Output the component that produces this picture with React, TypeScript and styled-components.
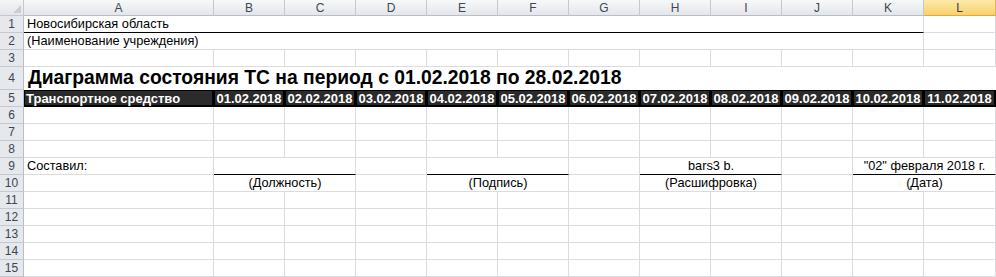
import styled, { createGlobalStyle } from 'styled-components';

const GlobalStyle = createGlobalStyle`
    html, body {
        margin: 0;
        padding: 0;
        background: #fff;
    }
    body {
        overflow: hidden;
    }
`;

const GRID_LINE = '#dadcdd';
const HEAD_LINE = '#c5c9cf';

const COLUMNS = ['A', 'B', 'C', 'D', 'E', 'F', 'G', 'H', 'I', 'J', 'K', 'L'];
const ACTIVE_COLUMN = 'L';

const DATES = Array.from({ length: 11 }, (_, i) => `${String(i + 1).padStart(2, '0')}.02.2018`);

const Sheet = styled.div`
    display: grid;
    grid-template-columns: 24px 190px repeat(10, 71px) 1fr;
    grid-template-rows: 16px repeat(3, 17px) 23px repeat(11, 17px);
    width: 996px;
    height: 277px;
    overflow: hidden;
    font-family: 'Liberation Sans', Arial, sans-serif;
    font-size: 12.75px;
    color: #000;
`;

const Corner = styled.div`
    position: relative;
    background: linear-gradient(#f4f5f7, #e3e6ea);
    border-right: 1px solid ${HEAD_LINE};
    border-bottom: 1px solid ${HEAD_LINE};

    &::after {
        content: '';
        position: absolute;
        right: 2px;
        bottom: 2px;
        border-style: solid;
        border-width: 0 0 8px 8px;
        border-color: transparent transparent #c9cdd2 transparent;
    }
`;

const ColHead = styled.div<{ $active?: boolean }>`
    display: flex;
    align-items: center;
    justify-content: center;
    font-size: 12px;
    color: ${(p) => (p.$active ? '#3b3b3b' : '#3f4650')};
    background: ${(p) =>
        p.$active ? 'linear-gradient(#fdeaa9, #f7d16e)' : 'linear-gradient(#f7f8fa, #e3e6ea)'};
    border-right: 1px solid ${(p) => (p.$active ? '#e9b44c' : HEAD_LINE)};
    border-bottom: 1px solid ${(p) => (p.$active ? '#e0a93a' : '#b9bec6')};
`;

const RowHead = styled.div`
    display: flex;
    align-items: center;
    justify-content: center;
    font-size: 12px;
    color: #3f4650;
    background: #e5e8ec;
    border-right: 1px solid #b9bec6;
    border-bottom: 1px solid ${HEAD_LINE};
`;

type Align = 'left' | 'center' | 'right';

const Cell = styled.div<{ $span?: number; $align?: Align; $rule?: boolean }>`
    grid-column: span ${(p) => p.$span ?? 1};
    display: flex;
    align-items: flex-end;
    justify-content: ${(p) =>
        p.$align === 'center' ? 'center' : p.$align === 'right' ? 'flex-end' : 'flex-start'};
    padding: 0 2px 1px 3px;
    line-height: 14px;
    white-space: nowrap;
    border-right: 1px solid ${GRID_LINE};
    border-bottom: 1px solid ${(p) => (p.$rule ? '#000' : GRID_LINE)};
`;

const TitleCell = styled.div`
    grid-column: span 12;
    display: flex;
    align-items: flex-end;
    padding: 0 0 2px 4px;
    font-size: 19.3px;
    font-weight: bold;
    line-height: 20px;
    white-space: nowrap;
`;

const HeadCell = styled.div<{ $align?: Align }>`
    display: flex;
    align-items: center;
    justify-content: ${(p) => (p.$align === 'center' ? 'center' : 'flex-start')};
    padding: 0 2px 0 2px;
    font-size: 13px;
    font-weight: bold;
    color: #fff;
    white-space: nowrap;
    background: #2b2b2b;
    box-shadow: inset 0 0 0 1px #000;
    border-right: 1px solid #000;
    border-bottom: 1px solid #000;
`;

const blankRow = (row: number) => [
    <RowHead key={`h${row}`}>{row}</RowHead>,
    ...COLUMNS.map((c) => <Cell key={`${c}${row}`} />),
];

const App = () => {
    return (
        <>
            <GlobalStyle />
            <Sheet>
                <Corner />
                {COLUMNS.map((c) => (
                    <ColHead key={c} $active={c === ACTIVE_COLUMN}>
                        {c}
                    </ColHead>
                ))}

                <RowHead>1</RowHead>
                <Cell $span={11} $rule>
                    Новосибирская область
                </Cell>
                <Cell />

                <RowHead>2</RowHead>
                <Cell $span={11}>(Наименование учреждения)</Cell>
                <Cell />

                {blankRow(3)}

                <RowHead>4</RowHead>
                <TitleCell>Диаграмма состояния ТС на период с 01.02.2018 по 28.02.2018</TitleCell>

                <RowHead>5</RowHead>
                <HeadCell>Транспортное средство</HeadCell>
                {DATES.map((d) => (
                    <HeadCell key={d} $align="center">
                        {d}
                    </HeadCell>
                ))}

                {blankRow(6)}
                {blankRow(7)}
                {blankRow(8)}

                <RowHead>9</RowHead>
                <Cell>Составил:</Cell>
                <Cell $span={2} $rule />
                <Cell />
                <Cell $span={2} $rule />
                <Cell />
                <Cell $span={2} $rule $align="center">
                    bars3 b.
                </Cell>
                <Cell />
                <Cell $span={2} $rule $align="center">
                    "02" февраля 2018 г.
                </Cell>

                <RowHead>10</RowHead>
                <Cell />
                <Cell $span={2} $align="center">
                    (Должность)
                </Cell>
                <Cell />
                <Cell $span={2} $align="center">
                    (Подпись)
                </Cell>
                <Cell />
                <Cell $span={2} $align="center">
                    (Расшифровка)
                </Cell>
                <Cell />
                <Cell $span={2} $align="center">
                    (Дата)
                </Cell>

                {blankRow(11)}
                {blankRow(12)}
                {blankRow(13)}
                {blankRow(14)}
                {blankRow(15)}
            </Sheet>
        </>
    );
};

export default App;
